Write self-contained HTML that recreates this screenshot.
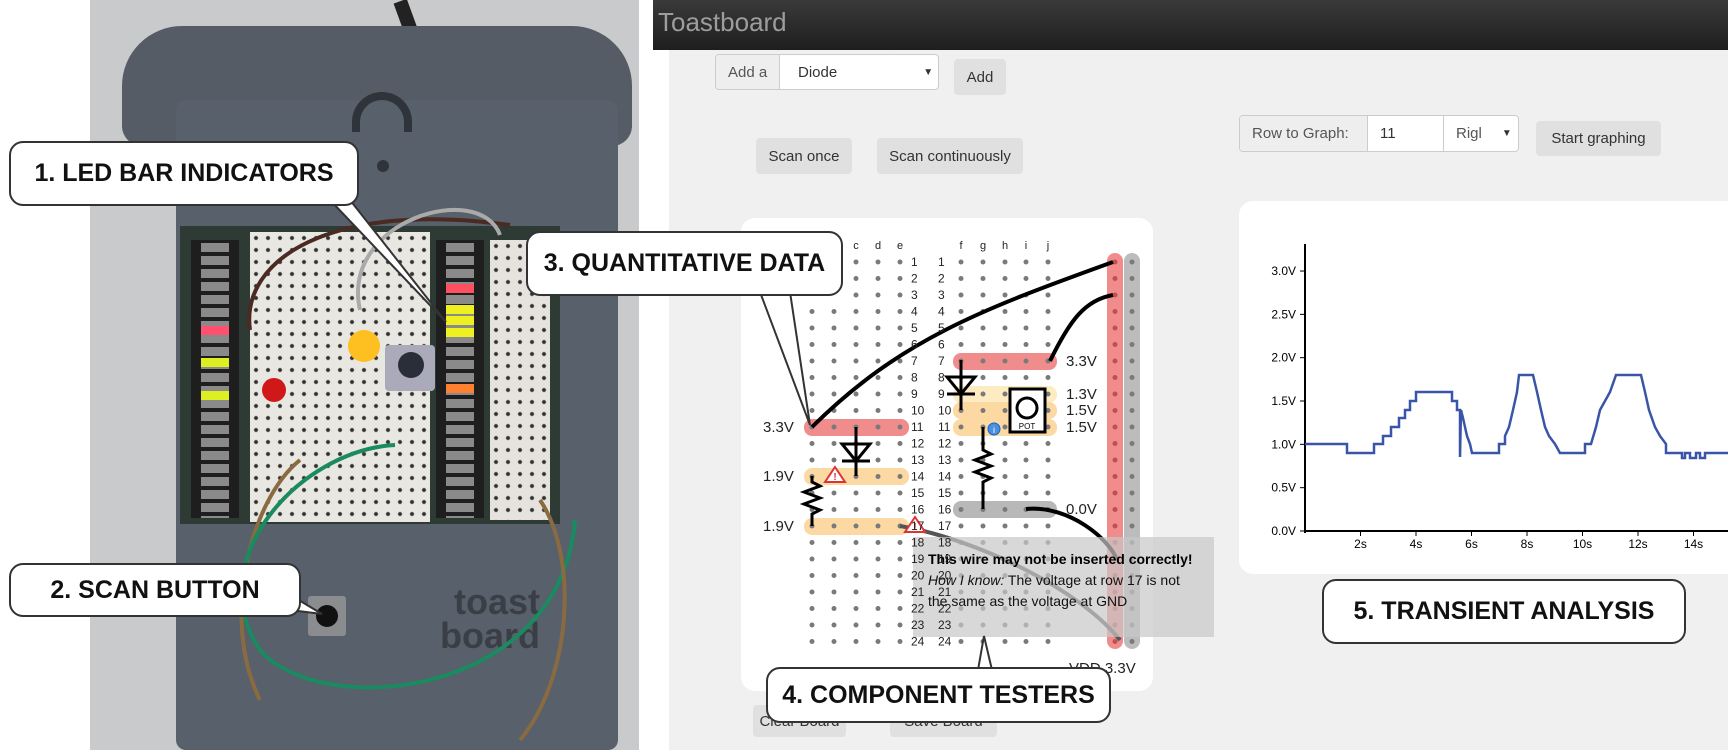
<!DOCTYPE html>
<html><head><meta charset="utf-8">
<style>
*{margin:0;padding:0;box-sizing:border-box}
html,body{width:1728px;height:750px;overflow:hidden;background:#fff;font-family:"Liberation Sans",Arial,sans-serif}
.abs{position:absolute}
.btn{position:absolute;background:#e0e0e0;border-radius:4px;color:#333;font-size:15px;display:flex;align-items:center;justify-content:center}
.grp{position:absolute;border:1px solid #ccc;border-radius:4px;background:#fff;display:flex;font-size:15px;color:#555;overflow:hidden}
.grp div{display:flex;align-items:center;padding-left:12px;border-right:1px solid #ccc}
.call{position:absolute;background:#fff;border:2px solid #333;border-radius:14px;font-weight:bold;font-size:25px;color:#111;display:flex;align-items:center;justify-content:center;z-index:5}
.led{background:#1e1e1e repeating-linear-gradient(#1e1e1e 0 3px,#8a8a8a 3px 12px,#1e1e1e 12px 13px);background-size:28px 13px;background-repeat:repeat-y;background-position:10px 0}
</style></head><body>
<!-- photo -->
<div class="abs" style="left:90px;top:0;width:549px;height:750px;background:#c9cacb"></div>
<div class="abs" style="left:400px;top:0;width:14px;height:40px;background:#222;transform:rotate(-20deg)"></div>
<div class="abs" style="left:122px;top:26px;width:510px;height:120px;background:#555c66;border-radius:60px 60px 20px 20px"></div>
<div class="abs" style="left:176px;top:100px;width:442px;height:650px;background:#57606b;border-radius:10px"></div>
<div class="abs" style="left:352px;top:92px;width:60px;height:40px;border:8px solid #2f343a;border-bottom:none;border-radius:40px 40px 0 0"></div>
<div class="abs" style="left:377px;top:160px;width:12px;height:12px;background:#2f343a;border-radius:50%"></div>
<div class="abs" style="left:180px;top:226px;width:380px;height:298px;background:#2e3a34"></div>
<div class="abs led" style="left:191px;top:240px;width:48px;height:278px"></div>
<div class="abs" style="left:250px;top:232px;width:180px;height:290px;background:#e9e7e2;background-image:radial-gradient(#333 1.5px,transparent 2.5px);background-size:12px 12px"></div>
<div class="abs led" style="left:436px;top:240px;width:48px;height:278px"></div>
<div class="abs" style="left:490px;top:240px;width:60px;height:280px;background:#e6e3de;background-image:radial-gradient(#333 1.5px,transparent 2.5px);background-size:12px 12px"></div>
<div class="abs" style="left:201px;top:326px;width:28px;height:9px;background:#ff5070"></div>
<div class="abs" style="left:201px;top:358px;width:28px;height:9px;background:#ddee22"></div>
<div class="abs" style="left:201px;top:391px;width:28px;height:9px;background:#ddee22"></div>
<div class="abs" style="left:446px;top:284px;width:28px;height:9px;background:#ff5060"></div>
<div class="abs" style="left:446px;top:305px;width:28px;height:9px;background:#eef020"></div>
<div class="abs" style="left:446px;top:316px;width:28px;height:9px;background:#eef020"></div>
<div class="abs" style="left:446px;top:328px;width:28px;height:9px;background:#eef020"></div>
<div class="abs" style="left:446px;top:384px;width:28px;height:9px;background:#ff8030"></div>
<div class="abs" style="left:348px;top:330px;width:32px;height:32px;background:#fdc020;border-radius:50%"></div>
<div class="abs" style="left:385px;top:345px;width:50px;height:46px;background:#aab;border-radius:4px"></div>
<div class="abs" style="left:398px;top:352px;width:26px;height:26px;background:#2a2e38;border-radius:50%"></div>
<div class="abs" style="left:262px;top:378px;width:24px;height:24px;background:#d01818;border-radius:50%"></div>
<div class="abs" style="left:308px;top:596px;width:38px;height:40px;background:#8a8c90;border-radius:3px"></div>
<div class="abs" style="left:316px;top:605px;width:22px;height:22px;background:#111;border-radius:50%"></div>
<div class="abs" style="left:440px;top:585px;font-size:36px;font-weight:bold;color:#3a3f46;line-height:34px;text-align:right">toast<br>board</div>
<svg class="abs" style="left:0;top:0" width="640" height="750">
<path d="M250 330 C240 260 330 200 510 225" stroke="#4a2a22" stroke-width="4" fill="none"/>
<path d="M360 310 C340 220 480 180 500 235" stroke="#aaa" stroke-width="4" fill="none"/>
<path d="M300 460 C250 500 220 620 260 700" stroke="#8a6a40" stroke-width="4" fill="none"/>
<path d="M395 445 C300 450 200 560 260 650 C320 720 560 700 575 520" stroke="#1a8a60" stroke-width="4" fill="none"/>
<path d="M540 500 C580 560 570 680 520 740" stroke="#8a6a40" stroke-width="4" fill="none"/>
</svg>

<!-- app -->
<div class="abs" style="left:653px;top:0;width:1075px;height:50px;background:linear-gradient(#3a3a3a,#1e1e1e)"></div>
<div class="abs" style="left:658px;top:7px;font-size:26px;color:#9d9d9d">Toastboard</div>
<div class="abs" style="left:669px;top:50px;width:1059px;height:700px;background:#f0f0f0"></div>

<div class="grp" style="left:715px;top:54px;width:224px;height:36px"><div style="width:64px;background:#eee">Add a</div><div style="flex:1;border:none;color:#333;padding-left:18px">Diode<span style="margin-left:86px;font-size:10px">▼</span></div></div>
<div class="btn" style="left:954px;top:59px;width:52px;height:36px">Add</div>
<div class="btn" style="left:756px;top:138px;width:96px;height:36px">Scan once</div>
<div class="btn" style="left:877px;top:138px;width:146px;height:36px">Scan continuously</div>
<div class="grp" style="left:1239px;top:115px;width:280px;height:37px"><div style="width:128px;background:#eee">Row to Graph:</div><div style="width:76px;color:#333">11</div><div style="flex:1;border:none">Rigl<span style="margin-left:20px;font-size:10px;color:#333">▼</span></div></div>
<div class="btn" style="left:1536px;top:121px;width:125px;height:35px">Start graphing</div>

<div class="btn" style="left:753px;top:705px;width:93px;height:32px">Clear Board</div>
<div class="btn" style="left:890px;top:705px;width:107px;height:32px">Save Board</div>

<div class="abs" style="left:741px;top:218px;width:412px;height:473px;background:#fff;border-radius:14px"></div>
<div class="abs" style="left:1239px;top:201px;width:489px;height:373px;background:#fff;border-radius:14px 0 0 14px"></div>

<svg class="abs" style="left:0;top:0" width="1728" height="750" id="bb">
<g font-family="Liberation Sans,Arial,sans-serif">
<rect x="1107" y="253" width="16" height="396" rx="8" fill="#f08c8c"/>
<rect x="1124" y="253" width="16" height="396" rx="8" fill="#bcbcbc"/>
<rect x="953" y="353" width="104" height="17" rx="8" fill="#f08c8c"/>
<rect x="804" y="419" width="105" height="17" rx="8" fill="#f08c8c"/>
<rect x="804" y="468" width="105" height="17" rx="8" fill="#fcd9a3"/>
<rect x="804" y="518" width="105" height="17" rx="8" fill="#fcd9a3"/>
<rect x="953" y="386" width="104" height="17" rx="8" fill="#fdebc2"/>
<rect x="953" y="402" width="104" height="17" rx="8" fill="#fcd9a3"/>
<rect x="953" y="419" width="104" height="17" rx="8" fill="#fcd9a3"/>
<rect x="953" y="501" width="104" height="17" rx="8" fill="#b8b8b8"/>
<g id="dots" fill="#7a7a7a"></g>
<g font-size="11" fill="#222" text-anchor="middle"><text x="856" y="249">c</text><text x="878" y="249">d</text><text x="900" y="249">e</text><text x="961" y="249">f</text><text x="983" y="249">g</text><text x="1005" y="249">h</text><text x="1026" y="249">i</text><text x="1048" y="249">j</text></g>
<g font-size="15" fill="#222"><text x="763" y="432">3.3V</text><text x="763" y="481">1.9V</text><text x="763" y="531">1.9V</text>
<text x="1066" y="366">3.3V</text><text x="1066" y="399">1.3V</text><text x="1066" y="415">1.5V</text><text x="1066" y="432">1.5V</text><text x="1066" y="514">0.0V</text><text x="1069" y="673">VDD  3.3V</text></g>
<g stroke="#000" stroke-width="4" fill="none">
<path d="M812 427 C900 340 980 310 1113 262"/>
<path d="M1050 361 C1070 320 1085 300 1113 295"/>
<path d="M1026 509 C1070 505 1110 540 1117 560"/>
<path d="M900 526 C980 540 1080 590 1120 640" stroke="#555"/>
<path d="M961 360 V410 M947 377 H975 L961 394 Z M947 394 H975" stroke-width="3"/>
<path d="M856 427 V476 M842 444 H870 L856 461 Z M842 461 H870" stroke-width="3"/>
<path d="M812 476 L812 482 L820 486 L804 492 L820 498 L804 504 L820 510 L812 514 V526" stroke-width="3"/>
<path d="M983 427 V450 L991 454 L975 460 L991 466 L975 472 L991 478 L983 482 V509" stroke-width="3"/>
<rect x="1010" y="389" width="35" height="43" stroke-width="3" fill="#fff"/>
<circle cx="1027" cy="408" r="10" stroke-width="3"/>
</g>
<text x="1027" y="429" font-size="8" text-anchor="middle">POT</text>
<circle cx="994" cy="429" r="6" fill="#4a90e2" stroke="#1a60c0"/><text x="994" y="433" font-size="9" fill="#fff" text-anchor="middle">i</text>
<path d="M825 482 L835 467 L845 482 Z" fill="#fff" stroke="#d33" stroke-width="2"/><text x="835" y="480" font-size="10" fill="#d33" text-anchor="middle" font-weight="bold">!</text>
<path d="M905 532 L915 517 L925 532 Z" fill="#fff" stroke="#d33" stroke-width="2"/><text x="915" y="530" font-size="10" fill="#d33" text-anchor="middle" font-weight="bold">!</text>
<rect x="913" y="537" width="301" height="100" fill="rgba(200,200,200,0.7)"/>
<text x="928" y="564" font-size="14" font-weight="bold" fill="#000">This wire may not be inserted correctly!</text>
<text x="928" y="585" font-size="14" fill="#111"><tspan font-style="italic">How I know:</tspan> The voltage at row 17 is not</text>
<text x="928" y="606" font-size="14" fill="#111">the same as the voltage at GND</text>

<!-- graph -->
<g stroke="#000" stroke-width="2"><line x1="1305" y1="244" x2="1305" y2="533"/><line x1="1304" y1="531" x2="1728" y2="531"/></g>
<g id="ax" font-size="12" fill="#000"></g>
<polyline fill="none" stroke="#3a55a8" stroke-width="2.5" points="1305,444 1347,444 1347,453 1374,453 1374,444 1383,444 1383,436 1391,436 1391,427 1399,427 1399,418 1405,418 1405,410 1410,410 1410,401 1416,401 1416,392 1452,392 1452,401 1457,401 1457,410 1460,410 1460,457 1461,410 1463,418 1465,427 1467,436 1470,444 1472,453 1499,453 1499,444 1505,444 1505,436 1509,427 1513,410 1517,392 1519,375 1533,375 1537,392 1541,410 1545,427 1549,436 1555,444 1560,453 1585,453 1585,444 1591,444 1596,427 1600,410 1605,401 1610,392 1616,375 1641,375 1645,392 1649,410 1655,427 1660,436 1666,444 1666,453 1682,453 1682,458 1685,458 1685,453 1690,453 1690,458 1696,458 1696,453 1700,453 1700,458 1705,458 1705,453 1728,453"/>

<!-- callout tails -->
<g fill="#fff" stroke="#333" stroke-width="2">
<path d="M350 200 L446 322 L330 200"/>
<path d="M290 610 L322 614 L292 596"/>
<path d="M760 292 L810 425 L790 292"/>
<path d="M978 670 L984 636 L992 670"/>
</g>
</g></svg>

<div class="call" style="left:9px;top:141px;width:350px;height:65px">1. LED BAR INDICATORS</div>
<div class="call" style="left:9px;top:563px;width:292px;height:54px">2. SCAN BUTTON</div>
<div class="call" style="left:526px;top:231px;width:317px;height:65px">3. QUANTITATIVE DATA</div>
<div class="call" style="left:766px;top:667px;width:345px;height:56px">4. COMPONENT TESTERS</div>
<div class="call" style="left:1322px;top:579px;width:364px;height:65px">5. TRANSIENT ANALYSIS</div>

<script>
var ns="http://www.w3.org/2000/svg",g=document.getElementById("dots"),svg=document.getElementById("bb");
var L=[812,834,856,878,900],R=[961,983,1005,1026,1048];
function t(x,y,s,a){var e=document.createElementNS(ns,"text");e.setAttribute("x",x);e.setAttribute("y",y);e.setAttribute("font-size",12);e.setAttribute("fill","#222");if(a)e.setAttribute("text-anchor",a);e.textContent=s;svg.appendChild(e);}
for(var r=1;r<=24;r++){var y=262+16.5*(r-1);
L.forEach(function(x,i){if(r<=3&&i<2)return;var c=document.createElementNS(ns,"circle");c.setAttribute("cx",x);c.setAttribute("cy",y);c.setAttribute("r",2.5);g.appendChild(c);});
R.forEach(function(x){var c=document.createElementNS(ns,"circle");c.setAttribute("cx",x);c.setAttribute("cy",y);c.setAttribute("r",2.5);g.appendChild(c);});
[1115,1132].forEach(function(x){var c=document.createElementNS(ns,"circle");c.setAttribute("cx",x);c.setAttribute("cy",y);c.setAttribute("r",2.5);c.setAttribute("fill",x<1120?"#c05050":"#7a7a7a");g.appendChild(c);});
t(911,y+4,r);t(938,y+4,r);}
var ax=document.getElementById("ax");
for(var i=0;i<=6;i++){var y=531-43.33*i;var e=document.createElementNS(ns,"text");e.setAttribute("x",1296);e.setAttribute("y",y+4);e.setAttribute("text-anchor","end");e.textContent=(i*0.5).toFixed(1)+"V";ax.appendChild(e);
var l=document.createElementNS(ns,"line");l.setAttribute("x1",1300);l.setAttribute("x2",1305);l.setAttribute("y1",y);l.setAttribute("y2",y);l.setAttribute("stroke","#000");ax.appendChild(l);}
for(var s=2;s<=14;s+=2){var x=1305+27.75*s;var e=document.createElementNS(ns,"text");e.setAttribute("x",x);e.setAttribute("y",548);e.setAttribute("text-anchor","middle");e.textContent=s+"s";ax.appendChild(e);
var l=document.createElementNS(ns,"line");l.setAttribute("x1",x);l.setAttribute("x2",x);l.setAttribute("y1",531);l.setAttribute("y2",536);l.setAttribute("stroke","#000");ax.appendChild(l);}
</script>
</body></html>
